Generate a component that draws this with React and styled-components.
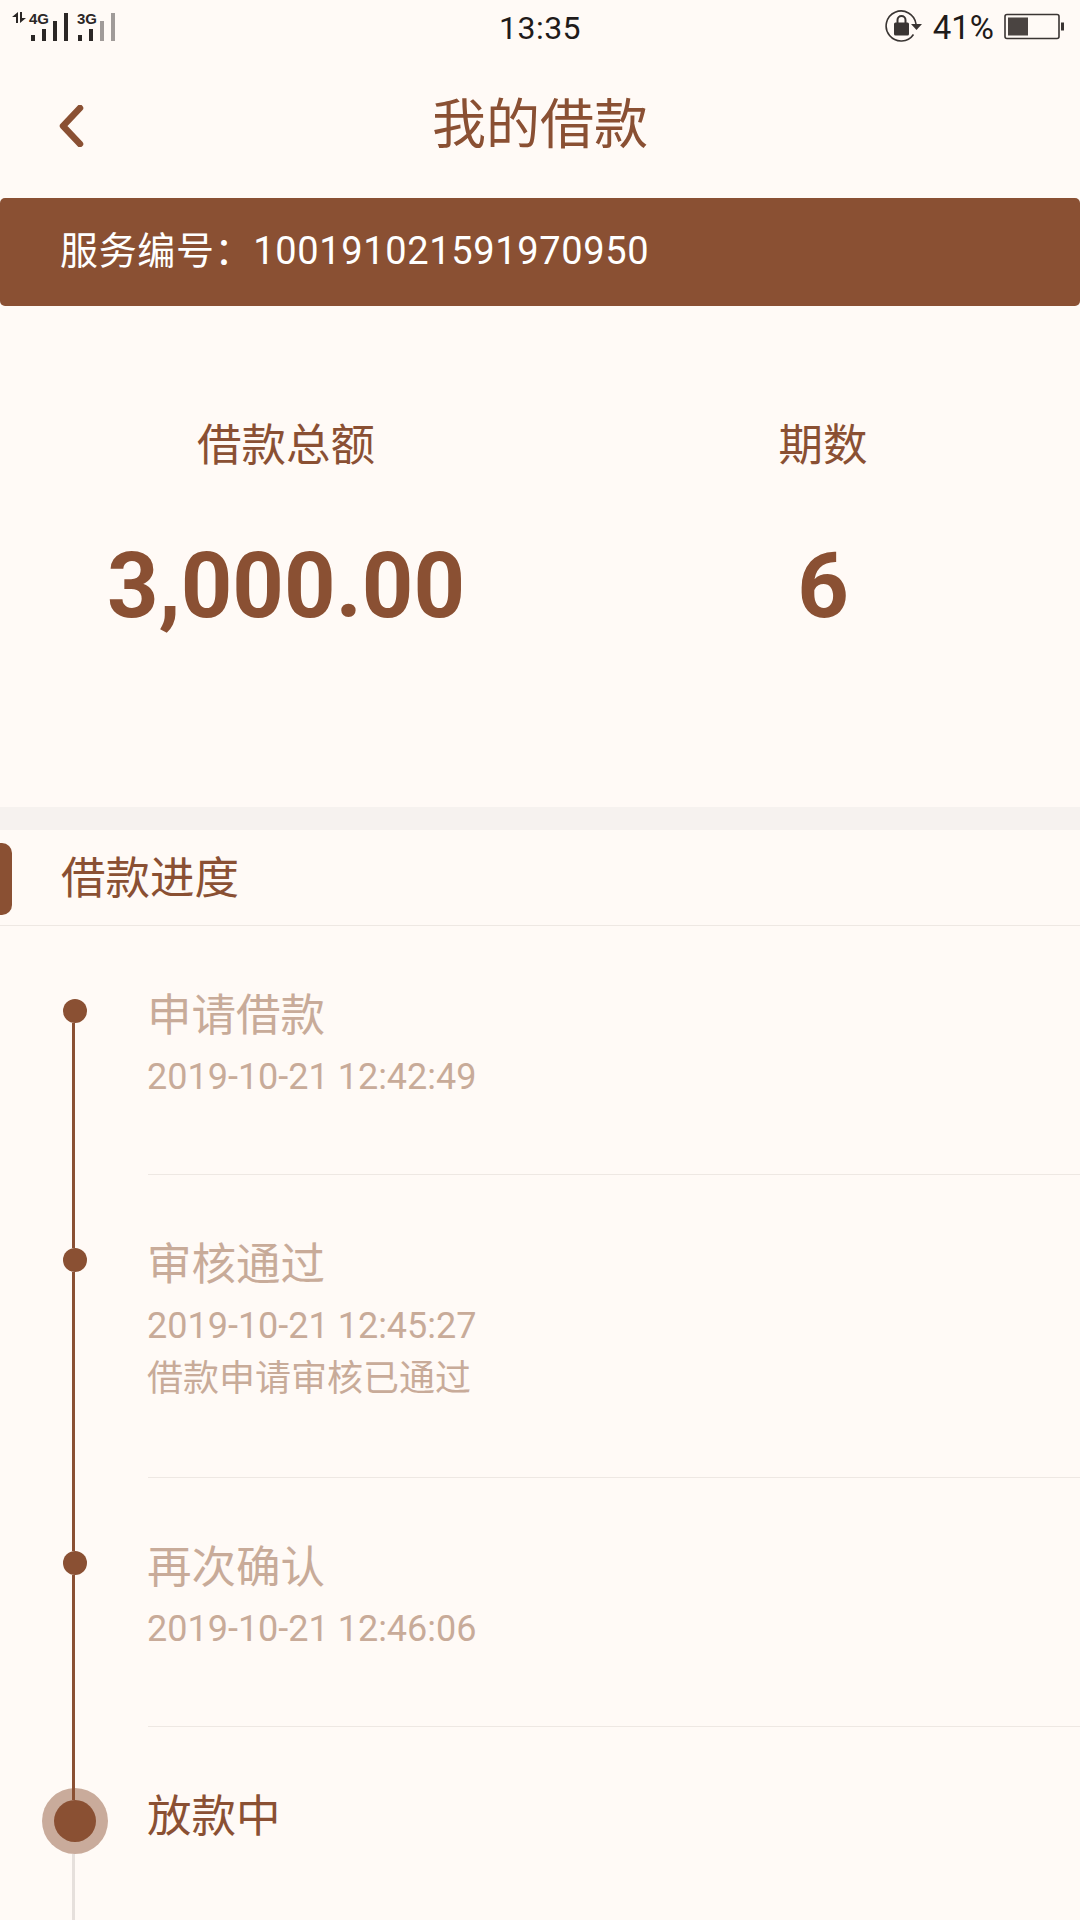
import React from "react";
import styled, { createGlobalStyle } from "styled-components";

const brown = "#8a5033";
const pale = "#c8ab99";
const bg = "#fffaf6";
const hairline = "#eee8e3";

const GlobalStyle = createGlobalStyle`
	html, body {
		margin: 0;
		background: ${bg};
		font-family: Roboto, "Noto Sans CJK SC", sans-serif;
	}
	* {
		box-sizing: border-box;
	}
`;

const steps = [
	{ title: "申请借款", time: "2019-10-21 12:42:49", height: 249 },
	{ title: "审核通过", time: "2019-10-21 12:45:27", note: "借款申请审核已通过", height: 303 },
	{ title: "再次确认", time: "2019-10-21 12:46:06", height: 249 },
];

const SignalIcon = () => (
	<svg width="120" height="54" viewBox="0 0 120 54">
		<path d="M18 12v11h-2v-6h-4zM20 23V12h2v6h4z" fill="#2b2726" />
		<text x="29" y="24" fontFamily="Liberation Sans" fontWeight="700" fontSize="15" fill="#2b2726">4G</text>
		<rect x="31" y="35" width="4" height="6" fill="#2b2726" />
		<rect x="42" y="29" width="4" height="12" fill="#2b2726" />
		<rect x="53" y="21" width="4" height="20" fill="#2b2726" />
		<rect x="64" y="13" width="4" height="28" fill="#2b2726" />
		<text x="77" y="24" fontFamily="Liberation Sans" fontWeight="700" fontSize="15" fill="#2b2726">3G</text>
		<rect x="78" y="35" width="4" height="6" fill="#2b2726" />
		<rect x="89" y="29" width="4" height="12" fill="#2b2726" />
		<rect x="100" y="21" width="4" height="20" fill="#a09b99" />
		<rect x="111" y="13" width="4" height="28" fill="#a09b99" />
	</svg>
);

const RotationLockIcon = () => (
	<svg width="38" height="34" viewBox="0 0 38 34">
		<path d="M28.5 24.5A15 15 0 1 1 31 14" fill="none" stroke="#3a3533" strokeWidth="1.6" />
		<path d="M26 14h11l-5.5 6z" fill="#3a3533" />
		<rect x="9" y="12.5" width="15" height="13" rx="1.5" fill="#3a3533" />
		<path d="M12.5 13V10a4 4 0 0 1 8 0v3" fill="none" stroke="#3a3533" strokeWidth="2" />
	</svg>
);

const BatteryIcon = () => (
	<svg width="60" height="28" viewBox="0 0 60 28">
		<rect x="1" y="1.5" width="54" height="24" rx="2" fill="none" stroke="#3a3533" strokeWidth="1.6" />
		<rect x="4" y="4.5" width="20" height="18" fill="#4a4441" />
		<rect x="57" y="9.5" width="3" height="8" fill="#3a3533" />
	</svg>
);

const BackIcon = () => (
	<svg width="28" height="42" viewBox="0 0 28 42">
		<path d="M24 3L7 21l17 18" fill="none" stroke={brown} strokeWidth="6.5" strokeLinecap="round" strokeLinejoin="round" />
	</svg>
);

const App = () => {
	return (
		<Page>
			<GlobalStyle />
			<StatusBar>
				<SignalIcon />
				<Clock>13:35</Clock>
				<StatusRight>
					<RotationLockIcon />
					<Percent>41%</Percent>
					<BatteryIcon />
				</StatusRight>
			</StatusBar>
			<NavBar>
				<BackButton>
					<BackIcon />
				</BackButton>
				<NavTitle>我的借款</NavTitle>
			</NavBar>
			<ServiceBanner>服务编号：100191021591970950</ServiceBanner>
			<Summary>
				<SummaryCol>
					<SummaryLabel>借款总额</SummaryLabel>
					<SummaryValue>3,000.00</SummaryValue>
				</SummaryCol>
				<SummaryCol>
					<SummaryLabel>期数</SummaryLabel>
					<SummaryValue>6</SummaryValue>
				</SummaryCol>
			</Summary>
			<SectionHead>
				<Accent />
				<SectionTitle>借款进度</SectionTitle>
			</SectionHead>
			<div>
				{steps.map((step, i) => (
					<Step key={step.title} $height={step.height}>
						<Rail>
							<RailLine $top $hidden={i === 0} />
							<Dot />
							<RailLine />
						</Rail>
						<StepBody $divided>
							<StepTitle>{step.title}</StepTitle>
							<StepText>{step.time}</StepText>
							{step.note && <StepNote>{step.note}</StepNote>}
						</StepBody>
					</Step>
				))}
				<Step $height={194}>
					<Rail>
						<RailLine $top />
						<CurrentDot />
						<RailLine $pending />
					</Rail>
					<StepBody>
						<CurrentTitle>放款中</CurrentTitle>
					</StepBody>
				</Step>
			</div>
		</Page>
	);
};

export default App;

const Page = styled.div`
	width: 1080px;
	height: 1920px;
	overflow: hidden;
	background: ${bg};
`;

const StatusBar = styled.div`
	height: 54px;
	padding: 0 16px 0 0;
	display: grid;
	grid-template-columns: 1fr auto 1fr;
	align-items: center;
`;

const Clock = styled.div`
	font-size: 32px;
	padding: 2px 0 0 16px;
	color: #1f1b1a;
	letter-spacing: 0.5px;
`;

const StatusRight = styled.div`
	display: flex;
	align-items: center;
	justify-content: flex-end;
	gap: 10px;
`;

const Percent = styled.div`
	font-size: 33px;
	color: #1f1b1a;
`;

const NavBar = styled.div`
	height: 144px;
	padding-bottom: 12px;
	position: relative;
	display: flex;
	align-items: center;
	justify-content: center;
`;

const BackButton = styled.div`
	position: absolute;
	left: 56px;
	top: 51px;
`;

const NavTitle = styled.h1`
	margin: 0;
	font-size: 54px;
	font-weight: 400;
	color: ${brown};
`;

const ServiceBanner = styled.div`
	height: 108px;
	padding: 0 0 9px 60px;
	display: flex;
	align-items: center;
	background: ${brown};
	border-radius: 5px;
	color: #fff;
	font-size: 38px;
	letter-spacing: 0.65px;
`;

const Summary = styled.div`
	height: 501px;
	padding-top: 110px;
	display: grid;
	grid-template-columns: 572px 502px;
`;

const SummaryCol = styled.div`
	display: flex;
	flex-direction: column;
	align-items: center;
	gap: 61px;
`;

const SummaryLabel = styled.div`
	font-size: 44.5px;
	line-height: 60px;
	color: ${brown};
`;

const SummaryValue = styled.div`
	font-size: 90px;
	line-height: 100px;
	font-weight: 700;
	color: ${brown};
`;

const SectionHead = styled.div`
	height: 119px;
	border-top: 23px solid #f6f2ef;
	border-bottom: 1px solid ${hairline};
	display: flex;
	align-items: center;
`;

const Accent = styled.div`
	width: 12px;
	height: 72px;
	margin-top: 3px;
	background: ${brown};
	border-radius: 0 10px 10px 0;
`;

const SectionTitle = styled.h2`
	margin: 0 0 7px 49px;
	font-size: 44.5px;
	font-weight: 400;
	color: ${brown};
`;

const Step = styled.div`
	height: ${(p) => p.$height}px;
	display: grid;
	grid-template-columns: 148px 1fr;
`;

const Rail = styled.div`
	padding-left: 63px;
	width: 90px;
	display: flex;
	flex-direction: column;
	align-items: flex-start;
`;

const RailLine = styled.div`
	flex: ${(p) => (p.$top ? "none" : "1")};
	height: ${(p) => (p.$top ? "73px" : "auto")};
	width: 3px;
	margin-left: 9px;
	position: relative;
	z-index: 1;
	background: ${(p) => (p.$pending ? "#e6e0dc" : brown)};
	visibility: ${(p) => (p.$hidden ? "hidden" : "visible")};
	${(p) => p.$pending && "margin-top: 12px; z-index: 0;"}
`;

const Dot = styled.div`
	width: 24px;
	height: 24px;
	flex: none;
	border-radius: 50%;
	background: ${brown};
`;

const CurrentDot = styled.div`
	width: 42px;
	height: 42px;
	flex: none;
	margin-left: -9px;
	border-radius: 50%;
	background: ${brown};
	box-shadow: 0 0 0 12px #c9ab9b;
`;

const StepBody = styled.div`
	padding-top: 58px;
	border-bottom: ${(p) => (p.$divided ? `1px solid ${hairline}` : "0")};
`;

const StepTitle = styled.div`
	font-size: 44.5px;
	line-height: 64px;
	margin-left: -1px;
	color: ${pale};
`;

const CurrentTitle = styled(StepTitle)`
	color: ${brown};
	margin-top: 0;
`;

const StepText = styled.div`
	font-size: 36px;
	line-height: 52px;
	padding-top: 3px;
	margin-left: -1px;
	color: ${pale};
`;

const StepNote = styled.div`
	font-size: 36px;
	line-height: 54px;
	margin-left: -1px;
	color: ${pale};
`;
